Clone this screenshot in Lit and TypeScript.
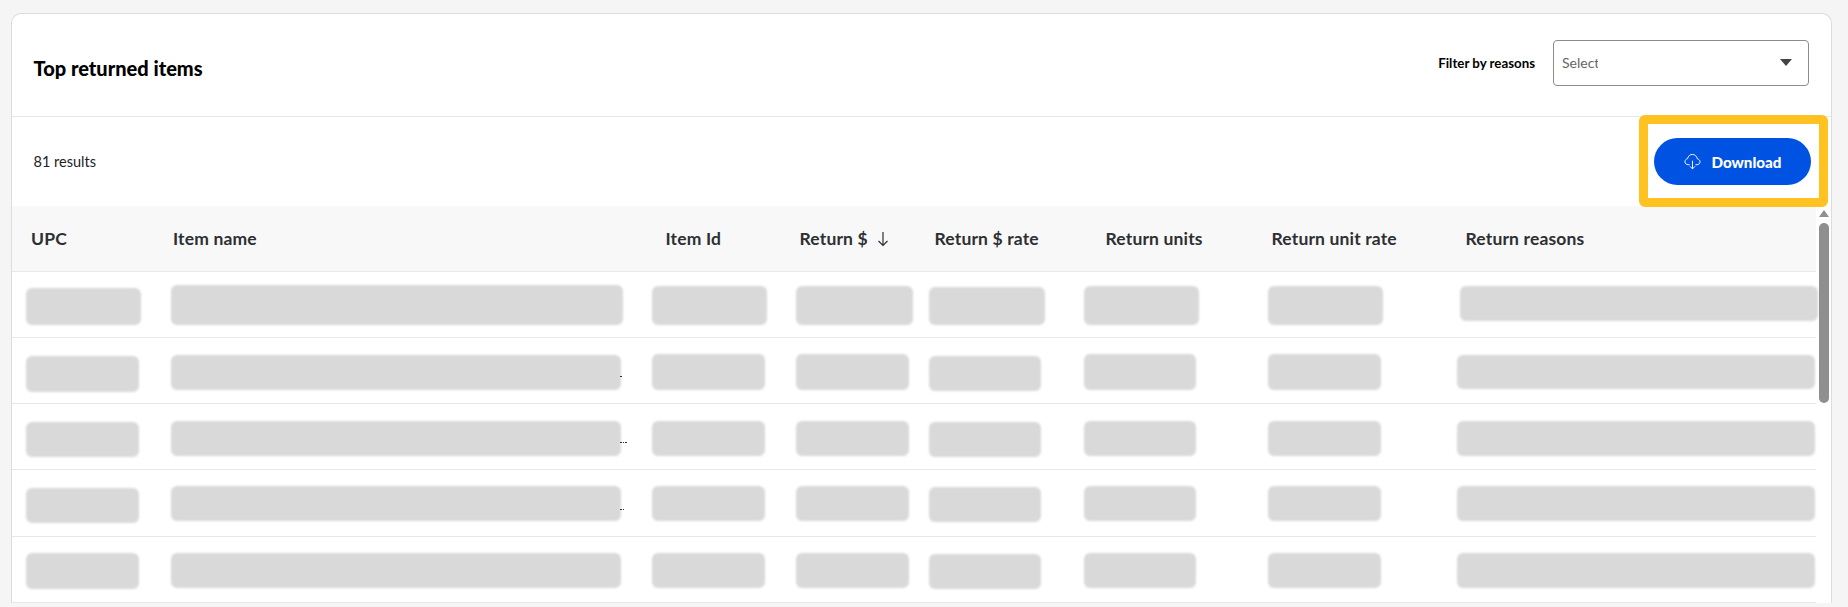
import { LitElement, html, css, svg } from "lit";
import { customElement } from "lit/decorators.js";

type Block = [number, number, number, number];

const HEADERS = [
  { label: "UPC", start: 31.5 },
  { label: "Item name", start: 173.5 },
  { label: "Item Id", start: 666 },
  { label: "Return $", start: 800 },
  { label: "Return $ rate", start: 935 },
  { label: "Return units", start: 1106 },
  { label: "Return unit rate", start: 1272 },
  { label: "Return reasons", start: 1466 },
];
const SORTED = "Return $";

const COLUMN_X = [26, 171, 652, 796, 929, 1084, 1268, 1457];

// Each block: x, offset from the row's top, width, height
const ROWS: { h: number; blocks: Block[]; dots?: number }[] = [
  {
    h: 66,
    blocks: [
      [26, 16, 115, 37], [171, 13, 452, 40], [652, 14, 115, 39], [796, 14, 117, 39],
      [929, 15, 116, 38], [1084, 14, 115, 39], [1268, 14, 115, 39], [1460, 14, 358, 35],
    ],
  },
  {
    h: 66,
    blocks: [
      [26, 18, 113, 36], [171, 17, 450, 35], [652, 16, 113, 36], [796, 16, 113, 36],
      [929, 18, 112, 35], [1084, 16, 112, 36], [1268, 16, 113, 36], [1457, 17, 358, 34],
    ],
    dots: 1,
  },
  {
    h: 66,
    blocks: [
      [26, 18, 113, 35], [171, 17, 450, 35], [652, 17, 113, 35], [796, 17, 113, 35],
      [929, 18, 112, 35], [1084, 17, 112, 35], [1268, 17, 113, 35], [1457, 17, 358, 35],
    ],
    dots: 3,
  },
  {
    h: 67,
    blocks: [
      [26, 18, 113, 35], [171, 16, 450, 35], [652, 16, 113, 35], [796, 16, 113, 35],
      [929, 17, 112, 35], [1084, 16, 112, 35], [1268, 16, 113, 35], [1457, 16, 358, 35],
    ],
    dots: 2,
  },
  {
    h: 66,
    blocks: [
      [26, 16, 113, 36], [171, 16, 450, 35], [652, 16, 113, 35], [796, 16, 113, 35],
      [929, 17, 112, 35], [1084, 16, 112, 35], [1268, 16, 113, 35], [1457, 16, 358, 35],
    ],
  },
];

const CARD_X = 12.5;
const COLS = COLUMN_X.map((x, i) => (i === COLUMN_X.length - 1 ? "1fr" : `${COLUMN_X[i + 1] - x}px`)).join(" ");

const cloudIcon = svg`<svg class="cloud" viewBox="0 0 18 18" width="17" height="17" fill="none" stroke="#fff" stroke-width="1" stroke-linecap="round" stroke-linejoin="round">
  <path d="M5.6 12.4H4.3C2.5 12.4 1 11 1 9.2c0-1.6 1.2-3 2.8-3.2C4.2 3.4 6.3 1.5 8.9 1.5c2.7 0 4.9 2.1 5.2 4.7 1.6.3 2.9 1.6 2.9 3.1 0 1.7-1.4 3.1-3.2 3.1h-1.2"/>
  <path d="M9 8.6v8M6.6 14.4 9 16.8l2.4-2.4"/>
</svg>`;

@customElement("app-root")
export class AppRoot extends LitElement {
  static styles = css`
    :host {
      display: block;
      height: 607px;
      overflow: hidden;
      background: #f5f5f5;
      font-family: "Lato", "Liberation Sans", sans-serif;
      color: #000;
    }
    .page {
      padding: 13px 16px 0 11px;
    }
    .card {
      background: #fff;
      border: 1.5px solid #dcdcdc;
      border-bottom: none;
      border-radius: 10px 10px 0 0;
    }
    .head {
      height: 102px;
      border-bottom: 1px solid #e8e8e8;
      display: flex;
      align-items: center;
      padding: 0 22px 0 21.5px;
    }
    .title {
      font-size: 20px;
      font-weight: 900;
      flex: 1;
      padding-top: 6px;
    }
    .filter {
      display: flex;
      align-items: center;
      gap: 18px;
      padding-bottom: 5px;
    }
    .filter label {
      font-size: 13.3px;
      font-weight: 700;
    }
    .select {
      width: 256px;
      height: 46px;
      box-sizing: border-box;
      border: 1.5px solid #8c8c8c;
      border-radius: 4px;
      display: flex;
      align-items: center;
      justify-content: space-between;
      padding: 0 16px 0 8px;
      font-size: 14px;
      color: #666;
    }
    .select span {
      width: 36px;
      overflow: hidden;
      white-space: nowrap;
    }
    .caret {
      width: 0;
      height: 0;
      border-left: 6px solid transparent;
      border-right: 6px solid transparent;
      border-top: 7px solid #444;
    }
    .toolbar {
      height: 89px;
      display: flex;
      align-items: center;
      justify-content: space-between;
      padding: 0 20px 0 21.5px;
    }
    .count {
      font-size: 14.5px;
      color: #222;
    }
    .btn {
      position: relative;
      width: 157px;
      height: 47px;
      box-sizing: border-box;
      border-radius: 24px;
      background: #0053e2;
      color: #fff;
      display: flex;
      align-items: center;
      justify-content: center;
      gap: 10px;
      font-size: 15.2px;
      font-weight: 900;
      padding-left: 1px;
    }
    .highlight {
      position: absolute;
      left: -15px;
      right: -17px;
      top: -23px;
      bottom: -22px;
      border: 9px solid #ffc220;
      border-radius: 6px;
      z-index: 2;
    }
    .tablewrap {
      display: flex;
    }
    .table {
      width: 1804px;
      flex: none;
    }
    .row {
      display: grid;
      box-sizing: border-box;
      border-bottom: 1px solid #e8e8e8;
      position: relative;
      padding-left: 13.5px;
    }
    .thead {
      height: 66px;
      background: #f8f8f8;
      padding-left: 0;
    }
    .th {
      position: absolute;
      top: 0;
      bottom: 0;
      display: flex;
      align-items: center;
      gap: 9px;
      font-size: 17.5px;
      letter-spacing: 0.15px;
      font-weight: 700;
      color: #2e2f32;
      white-space: nowrap;
    }
    .th svg {
      display: block;
    }
    .cell {
      min-width: 0;
    }
    .sk {
      background: #d9d9d9;
      border-radius: 6px;
      filter: blur(0.8px);
    }
    .dots {
      position: absolute;
      left: 608px;
      bottom: 26px;
      font-size: 0;
      display: flex;
      gap: 1px;
    }
    .dots i {
      width: 1.5px;
      height: 1.5px;
      background: #333;
    }
    .bar {
      flex: 1;
      position: relative;
      padding: 4px 2px 0 3px;
      display: flex;
      flex-direction: column;
      align-items: stretch;
      gap: 6px;
    }
    .up {
      width: 0;
      height: 0;
      align-self: center;
      border-left: 5px solid transparent;
      border-right: 5px solid transparent;
      border-bottom: 7px solid #8f8f8f;
    }
    .thumb {
      height: 180px;
      background: #8f8f8f;
      border-radius: 5px;
    }
  `;

  private renderRow(r: (typeof ROWS)[number]) {
    return html`<div class="row" style="height:${r.h}px;grid-template-columns:${COLS}">
      ${r.blocks.map((b, i) => html`<div class="cell">
        <div class="sk" style="margin-left:${b[0] - COLUMN_X[i]}px;margin-top:${b[1]}px;width:${b[2]}px;height:${b[3]}px"></div>
      </div>`)}
      ${r.dots ? html`<div class="dots">${Array.from({ length: r.dots }, () => html`<i></i>`)}</div>` : ""}
    </div>`;
  }

  render() {
    return html`<div class="page">
      <div class="card">
        <div class="head">
          <div class="title">Top returned items</div>
          <div class="filter">
            <label>Filter by reasons</label>
            <div class="select"><span>Select</span><div class="caret"></div></div>
          </div>
        </div>
        <div class="toolbar">
          <div class="count">81 results</div>
          <div class="btn">${cloudIcon}<span>Download</span><div class="highlight"></div></div>
        </div>
        <div class="tablewrap">
          <div class="table">
            <div class="row thead">
              ${HEADERS.map((h) => html`<div class="th" style="left:${h.start - CARD_X}px">${h.label}${h.label === SORTED
                ? html`<svg width="12" height="16" viewBox="0 0 12 16" fill="none" stroke="#2e2f32" stroke-width="1.2"><path d="M6 1v13.5M1.5 10 6 14.5 10.5 10"/></svg>`
                : ""}</div>`)}
            </div>
            ${ROWS.map((r) => this.renderRow(r))}
          </div>
          <div class="bar"><div class="up"></div><div class="thumb"></div></div>
        </div>
      </div>
    </div>`;
  }
}
